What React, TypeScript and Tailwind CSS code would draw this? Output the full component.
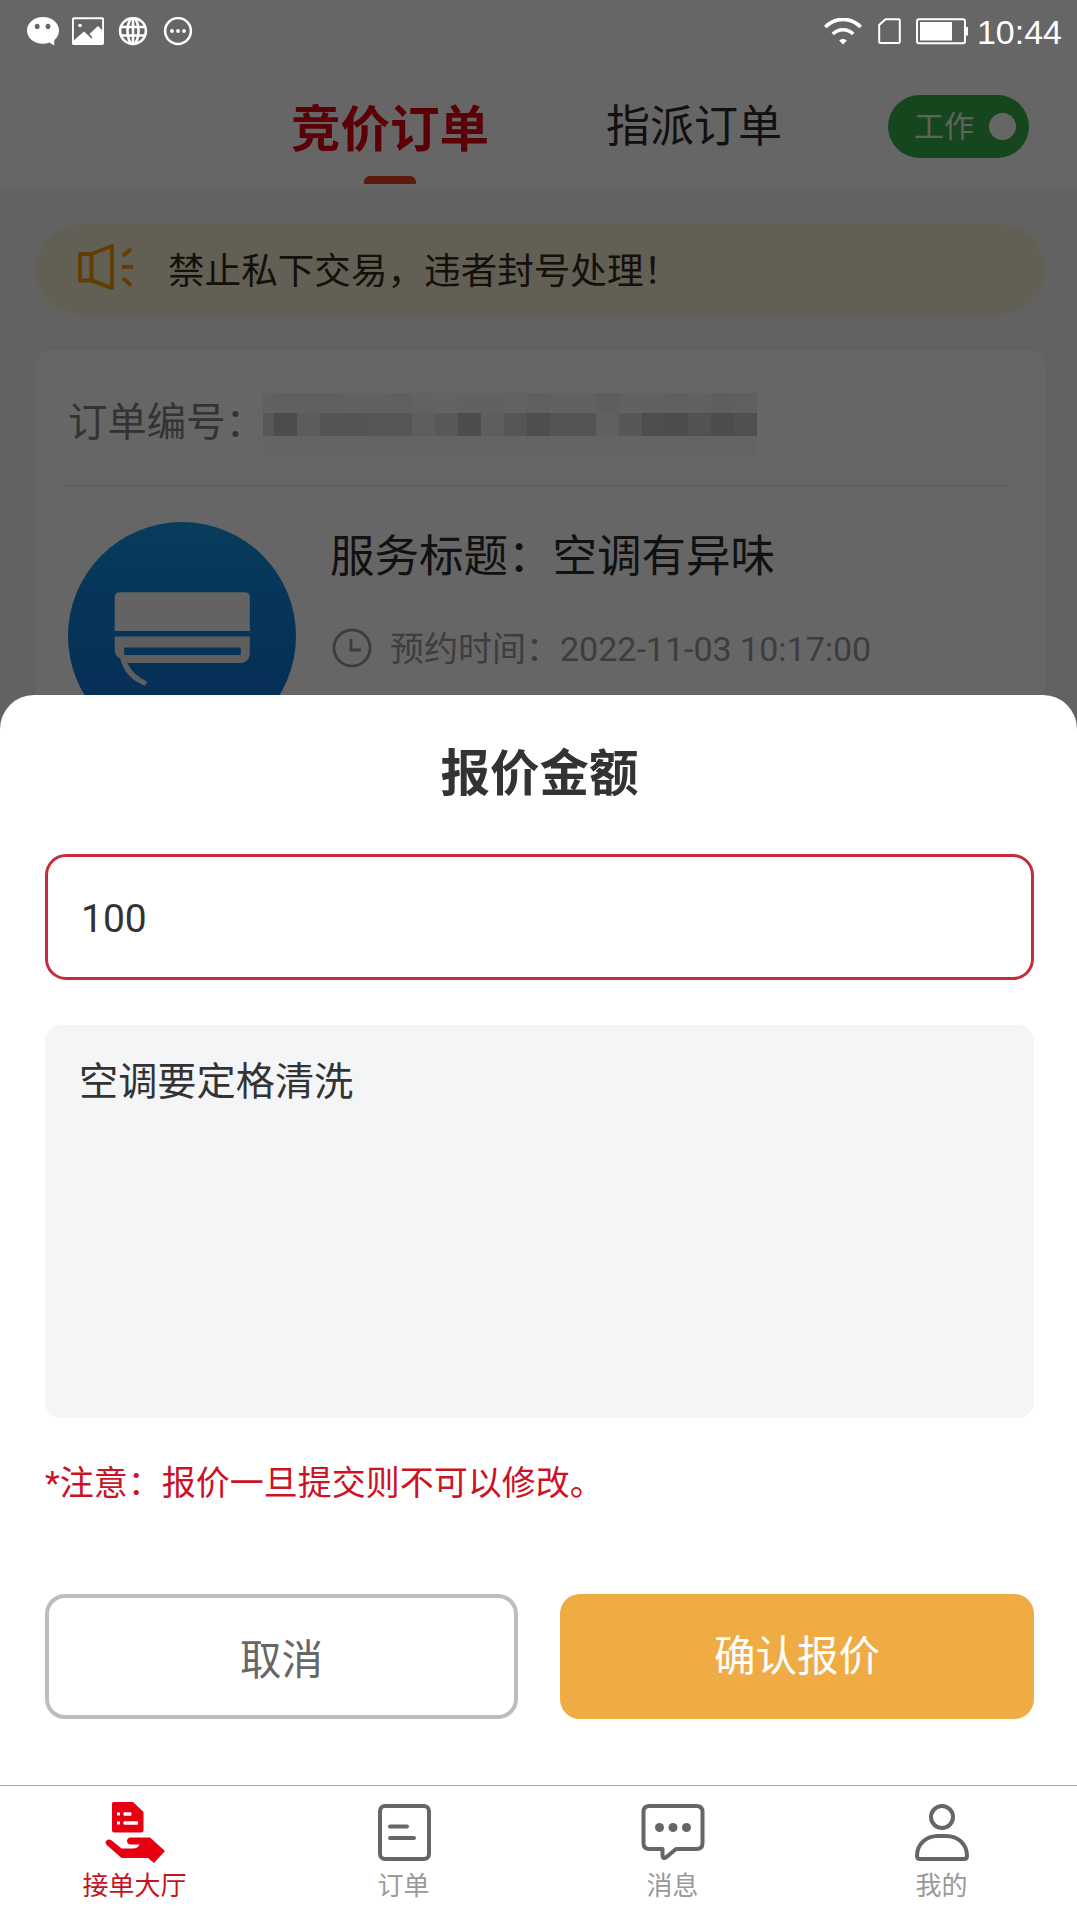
import type { ReactNode } from "react";

const mosaicTop = [
  "#616161", "#606060", "#606060", "#606060", "#616161", "#616161", "#606060", "#626262", "#636363", "#616161", "#616161",
  "#626262", "#606060", "#616161", "#616161", "#5e5e5e", "#616161", "#616161", "#606060", "#616161", "#5e5e5e", "#606060",
];
const mosaicMiddle = [
  "#585858", "#4c4c4c", "#5c5c5c", "#555555", "#545454", "#565656", "#565656", "#5e5e5e", "#595959", "#4d4d4d", "#5e5e5e",
  "#565656", "#4e4e4e", "#545454", "#545454", "#606060", "#575757", "#4e4e4e", "#4c4c4c", "#525252", "#4d4d4d", "#505050",
];

function StatusBar() {
  return (
    <div className="relative z-10 flex h-[62px] items-start justify-between pl-[26px] pr-[15px] pt-[17px] text-white">
      <div className="flex gap-[13px]">
        <svg width="33" height="29" viewBox="0 0 33 29">
          <path
            fill="currentColor"
            fillRule="evenodd"
            d="M17 0C26 0 33 6 33 13.500C33 17.500 31 21 28.300 23.300L28.200 28.500L23.500 25.600C21.500 26.400 19.400 26.800 17 26.800C8 26.800 1 21 1 13.500S8 0 17 0ZM11.200 6.800A2.400 2.600 0 1 0 11.200 12A2.400 2.600 0 1 0 11.200 6.800ZM22 6.800A2.400 2.600 0 1 0 22 12A2.400 2.600 0 1 0 22 6.800Z"
          />
        </svg>
        <svg width="32" height="28" viewBox="0 0 32 28" className="mr-px">
          <rect x="0.900" y="1.200" width="30.200" height="25.800" rx="1" fill="none" stroke="currentColor" strokeWidth="1.900" />
          <path fill="currentColor" d="M1 24L12 14.500L19.500 21.500L20.500 20.500L17.500 17L26 9L31 14V27H1Z" />
          <circle cx="8" cy="8.500" r="1.800" fill="currentColor" />
        </svg>
        <svg width="30" height="29" viewBox="0 0 30 29" fill="none" stroke="currentColor" strokeWidth="2.600">
          <circle cx="15" cy="14" r="12.900" />
          <ellipse cx="15" cy="14" rx="5.500" ry="13" />
          <path d="M15 1V27M3.500 10H26.500M3.500 18.500H26.500" />
        </svg>
        <svg width="32" height="29" viewBox="0 0 32 29" className="ml-px">
          <circle cx="16" cy="14" r="12.900" fill="none" stroke="currentColor" strokeWidth="2.500" />
          <g fill="currentColor">
            <circle cx="10" cy="14" r="1.900" />
            <circle cx="16" cy="14" r="1.900" />
            <circle cx="22" cy="14" r="1.900" />
          </g>
        </svg>
      </div>

      <div className="flex pt-px">
        <svg width="38" height="27" viewBox="0 0 38 27">
          <g fill="none" stroke="currentColor" strokeWidth="3.600">
            <path d="M1.200 9C11.500 -1.200 26.500 -1.200 36.800 9" />
            <path d="M8.800 16C14.500 10.400 23.500 10.400 29.200 16" />
          </g>
          <path fill="currentColor" d="M15.200 22.500C17.500 20.500 20.500 20.500 22.800 22.500L19 26.500Z" />
        </svg>
        <svg width="23" height="27" viewBox="0 0 23 27" className="ml-[16px]">
          <path
            d="M7.500 1.200H20.500Q21.800 1.200 21.800 2.500V23.700Q21.800 25 20.500 25H2.500Q1.200 25 1.200 23.700V7Z"
            fill="none"
            stroke="currentColor"
            strokeWidth="2"
          />
        </svg>
        <svg width="53" height="27" viewBox="0 0 53 27" className="ml-[15px]">
          <rect x="1" y="1.200" width="48" height="24" rx="2" fill="none" stroke="currentColor" strokeWidth="2" />
          <rect x="4" y="4" width="32" height="18.500" fill="currentColor" />
          <path d="M49 9H52V17.500H49Z" fill="currentColor" />
        </svg>
        <span className="ml-[8px] font-['Liberation_Sans',sans-serif] text-[34px] leading-[28px]">10:44</span>
      </div>
    </div>
  );
}

function Header() {
  return (
    <div className="flex h-[126px] items-start bg-white pr-12">
      <div className="ml-[291px] mt-[44px] flex flex-col items-center">
        <span className="text-[49.500px] font-bold leading-none text-[#e60012]">竞价订单</span>
        <span className="mt-[20px] h-2 w-[52px] rounded-t-[6px] bg-[#e6411e]" />
      </div>
      <span className="ml-[117px] mt-[43px] text-[44px] leading-none text-[#2b2b2b]">指派订单</span>
      <div className="ml-auto mt-[33px] flex h-[63px] w-[141px] items-center justify-between rounded-full bg-[#38b04b] pl-[26px] pr-[13px]">
        <span className="mt-px text-[30px] leading-none text-white/90">工作</span>
        <span className="size-[27px] rounded-full bg-white" />
      </div>
    </div>
  );
}

function Notice() {
  return (
    <div className="ml-9 mr-8 mt-[36px] flex h-[91px] items-center rounded-full bg-[#f5eed5] pl-[41px]">
      <svg width="58" height="48" viewBox="0 0 58 48" fill="none" stroke="#f59a0c" strokeWidth="4" className="-mt-1.5 shrink-0">
        <path d="M3 11H14.500L35 3V45L14.500 37.500H3Z" strokeLinejoin="round" />
        <path d="M14.500 11V37.500M46 13L54 6M45 24H56M46 35L54 42.500" />
      </svg>
      <span className="ml-[33px] mt-[5px] text-[36.600px] leading-none text-[#33291a]">禁止私下交易，违者封号处理！</span>
    </div>
  );
}

function MosaicRow({ colors, className }: { colors: string[]; className: string }) {
  return (
    <div className={`flex ${className}`}>
      {colors.map((color, i) => (
        <span key={i} className="w-[23px] shrink-0 first:w-[11px]" style={{ backgroundColor: color }} />
      ))}
    </div>
  );
}

function AirConditioner() {
  return (
    <svg width="228" height="228" viewBox="0 0 227 227" className="shrink-0">
      <defs>
        <linearGradient id="ac-bg" x1="0" y1="0" x2="0" y2="1">
          <stop offset="0" stopColor="#1597e6" />
          <stop offset="0.300" stopColor="#1186de" />
          <stop offset="1" stopColor="#0f6fd6" />
        </linearGradient>
      </defs>
      <circle cx="113.500" cy="113.500" r="113.500" fill="url(#ac-bg)" />
      <path d="M52 70H176Q181 70 181 75V108.500H46.500V75Q46.500 70 52 70Z" fill="#f7f7f7" />
      <path
        d="M46.500 114H181V130Q181 140.500 170 140.500H59Q65 153 79 159L76.500 163Q57 156 52 136Q46.500 134 46.500 127ZM56 125V132.500H172V125Z"
        fill="#ececec"
        fillRule="evenodd"
      />
    </svg>
  );
}

function OrderCard() {
  return (
    <div className="ml-9 mr-8 mt-[35px] h-[500px] rounded-[16px] bg-white">
      <div className="ml-7 mr-9 flex h-[137px] items-start border-b-2 border-[#ebebeb] pl-1">
        <span className="mt-[53px] w-[196px] shrink-0 whitespace-nowrap text-[39.400px] leading-none text-[#808080]">
          订单编号：
        </span>
      </div>
      <div className="flex pl-8 pt-[35px]">
        <AirConditioner />
        <div className="ml-[34px] pt-[13px]">
          <div className="text-[44.500px] leading-none text-[#2b2b2b]">服务标题：空调有异味</div>
          <div className="mt-[48px] flex items-center">
            <svg width="40" height="40" viewBox="0 0 40 40" fill="none" stroke="#999" strokeWidth="2.800" className="ml-[2px]">
              <circle cx="20" cy="20" r="18" />
              <path d="M19 11V22H29" />
            </svg>
            <span className="ml-[18px] mt-[2px] text-[34px] leading-none text-[#999]">预约时间：2022-11-03 10:17:00</span>
          </div>
        </div>
      </div>
    </div>
  );
}

function QuoteSheet() {
  return (
    <div className="absolute inset-x-0 bottom-[131px] top-[695px] rounded-t-[34px] bg-white pl-[45px] pr-[43px] pt-[55px]">
      <h2 className="text-center text-[49.500px] font-bold leading-none text-[#333]">报价金额</h2>
      <div className="mt-[54px] flex h-[126px] items-center rounded-[21px] border-[3px] border-[#c72c3c] pl-[33px] pt-[6px] text-[39px] leading-none text-[#333]">
        100
      </div>
      <div className="mt-[45px] h-[393px] rounded-[16px] bg-[#f4f5f7] pl-[34px] pt-[38px] text-[39.200px] leading-none text-[#333]">
        空调要定格清洗
      </div>
      <p className="mt-[48px] text-[34px] leading-none text-[#cb1326]">*注意：报价一旦提交则不可以修改。</p>
      <div className="mt-[94px] flex justify-between">
        <button className="h-[125px] w-[473px] rounded-[20px] border-[4px] border-[#bdbdbd] pt-[9px] text-[41.500px] leading-none text-[#666]">
          取消
        </button>
        <button className="h-[125px] w-[474px] rounded-[20px] bg-[#efab44] pt-[2px] text-[41.500px] leading-none text-white">
          确认报价
        </button>
      </div>
    </div>
  );
}

function NavItem({ label, active, children }: { label: string; active?: boolean; children: ReactNode }) {
  return (
    <div className="flex flex-1 flex-col items-center pt-[15px]">
      <svg width="64" height="64" viewBox="0 0 64 64" fill="none" stroke="#666" strokeWidth="4">
        {children}
      </svg>
      <span className={`mt-[8px] text-[26px] leading-none ${active ? "text-[#c41420]" : "text-[#999]"}`}>{label}</span>
    </div>
  );
}

function TabBar() {
  return (
    <div className="absolute inset-x-0 bottom-0 flex h-[132px] border-t border-[#a3a6a6] bg-white pr-px">
      <NavItem label="接单大厅" active>
        <g fill="#e60012" stroke="none">
          <path
            fillRule="evenodd"
            d="M10.500 1H30L40.500 11V29Q40.500 31.500 38 31.500H11.500Q9 31.500 9 29V3Q9 1 10.500 1ZM14 11.500V14.500H17V11.500ZM21 11.200Q19.500 13 21 14.800H28Q29.500 13 28 11.200ZM14 20.500V23.500H17V20.500ZM21 20.200Q19.500 22 21 23.800H34.500Q36 22 34.500 20.200Z"
          />
          <path d="M3.500 39.500Q6 37.500 9 39.800L18.500 47.500H30Q35 47.500 36.500 43.500H27Q24 43 24 39.500Q24.500 36.500 27.500 36.500H47L62 50L51 62L45 57H18.500L3.800 44Q1.500 41.500 3.500 39.500Z" />
        </g>
      </NavItem>
      <NavItem label="订单">
        <rect x="8" y="5" width="49" height="53" rx="5" />
        <path d="M18 25.500H35M18 37H42" strokeLinecap="round" />
      </NavItem>
      <NavItem label="消息">
        <path
          d="M8.500 5H55.500Q61.500 5 61.500 11V42Q61.500 48 55.500 48H35L25.500 56Q22 58.500 21.500 55V48H8.500Q2.500 48 2.500 42V11Q2.500 5 8.500 5Z"
          strokeLinejoin="round"
        />
        <g fill="#666" stroke="none">
          <circle cx="18.500" cy="26.500" r="4.500" />
          <circle cx="32" cy="26.500" r="4.500" />
          <circle cx="45.500" cy="26.500" r="4.500" />
        </g>
      </NavItem>
      <NavItem label="我的">
        <circle cx="32" cy="16" r="11" />
        <path d="M28 35H36C48 35 57 43 57 55Q57 58 54 58H10Q7 58 7 55C7 43 16 35 28 35Z" />
      </NavItem>
    </div>
  );
}

export default function App() {
  return (
    <div
      lang="zh-CN"
      className="relative h-[1917px] w-[1077px] overflow-hidden bg-[#f6f6f6] font-[Roboto,'Noto_Sans_CJK_SC',sans-serif]"
    >
      <div className="absolute inset-x-0 top-0 h-[62px] bg-white" />
      <div className="absolute inset-0 z-[5] bg-black/60" />
      <StatusBar />
      <Header />
      <Notice />
      <OrderCard />
      {/* Censored order number, sits above the dimmed page */}
      <div className="absolute left-[263px] top-[393px] z-[6]">
        <MosaicRow colors={mosaicTop} className="h-5" />
        <MosaicRow colors={mosaicMiddle} className="h-[23px]" />
        <div className="h-5 bg-[#646464]" />
      </div>
      <div className="absolute inset-0 z-[7]">
        <QuoteSheet />
        <TabBar />
      </div>
    </div>
  );
}
